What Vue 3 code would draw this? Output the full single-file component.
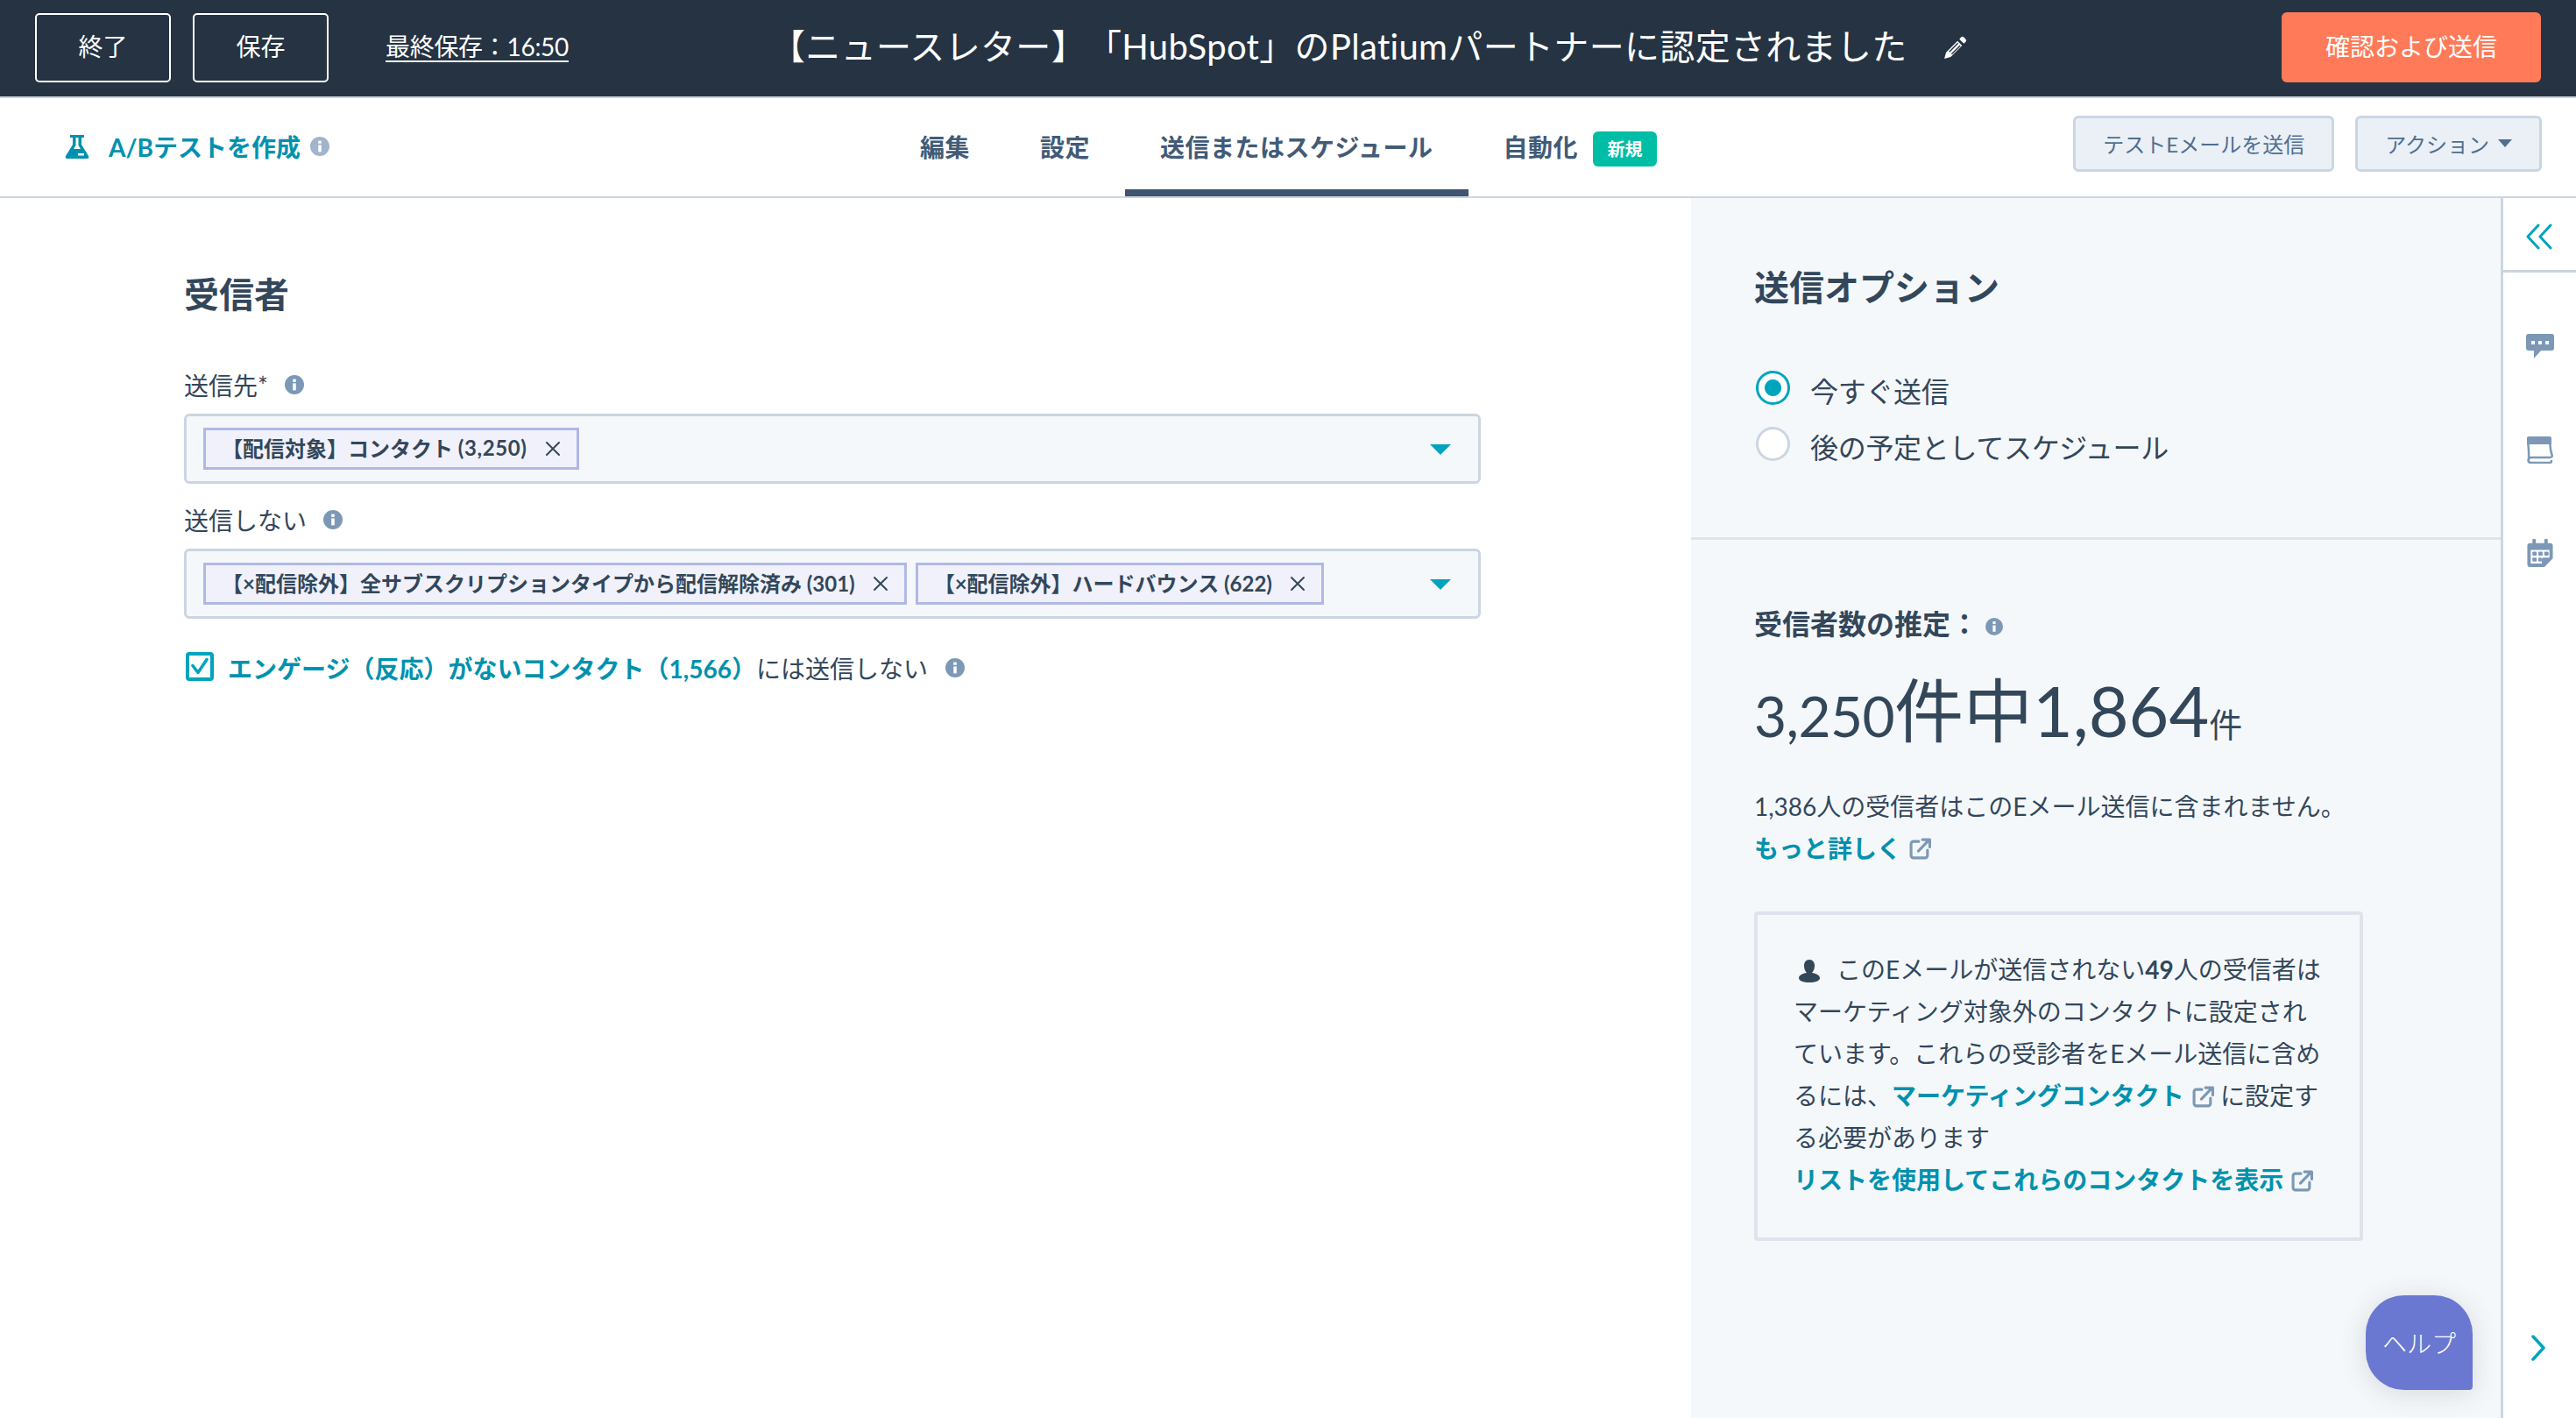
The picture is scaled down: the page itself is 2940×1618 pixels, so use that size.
<script setup>
const tabs = [
  { label: '編集' },
  { label: '設定' },
  { label: '送信またはスケジュール', active: true },
  { label: '自動化', badge: '新規' },
]

const sideIcons = ['chat', 'book', 'calendar']
</script>

<template>
  <div class="page">
    <!-- icon sprite -->
    <svg class="sprite" aria-hidden="true">
      <symbol id="info" viewBox="0 0 22 22">
        <circle cx="11" cy="11" r="11" fill="currentColor" />
        <rect x="9.2" y="9.4" width="3.6" height="8" fill="#fff" />
        <rect x="9.2" y="4.6" width="3.6" height="3.2" fill="#fff" />
      </symbol>
      <symbol id="external" viewBox="0 0 24 24">
        <path d="M10.500 4H4.500A2.500 2.500 0 0 0 2 6.500v13A2.500 2.500 0 0 0 4.500 22h13a2.500 2.500 0 0 0 2.500-2.500V13.500" fill="none" stroke="#7c98b6" stroke-width="3" stroke-linecap="round" />
        <path d="M10 14.500 21.500 2.500M14.500 2h8v8" fill="none" stroke="#7c98b6" stroke-width="3" stroke-linecap="round" stroke-linejoin="round" />
      </symbol>
      <symbol id="close" viewBox="0 0 18 18">
        <path d="M2 2l14 14M16 2 2 16" fill="none" stroke="#33475b" stroke-width="2" stroke-linecap="round" />
      </symbol>
      <symbol id="chat" viewBox="0 0 32 30">
        <path d="M3 1h26a3 3 0 0 1 3 3v13a3 3 0 0 1-3 3H17l-8 9v-9H3a3 3 0 0 1-3-3V4a3 3 0 0 1 3-3z" fill="#7c98b6" />
        <rect x="6" y="9" width="4" height="4" fill="#fff" />
        <rect x="14" y="9" width="4" height="4" fill="#fff" />
        <rect x="22" y="9" width="4" height="4" fill="#fff" />
      </symbol>
      <symbol id="book" viewBox="0 0 32 32">
        <path d="M3 1h24a2 2 0 0 1 2 2v7H1V3a2 2 0 0 1 2-2z" fill="#7c98b6" />
        <path d="M2.500 9c0 5 1 10 .5 15M27.500 9c0 5 .5 9 2 13 .8 2-.5 3-2.500 3H6c-2 0-3.500 1-3.500 3S4 31 6 31h21c1.500 0 2-.8 2-2" fill="none" stroke="#7c98b6" stroke-width="2.500" stroke-linecap="round" />
      </symbol>
      <symbol id="calendar" viewBox="0 0 30 33">
        <path d="M7 0h2a1 1 0 0 1 1 1v4h10V1a1 1 0 0 1 1-1h2a1 1 0 0 1 1 1v4h3a3 3 0 0 1 3 3v15l-10 10H3a3 3 0 0 1-3-3V8a3 3 0 0 1 3-3h3V1a1 1 0 0 1 1-1z" fill="#7c98b6" />
        <path d="M4 13h22v9h-7a2 2 0 0 0-2 2v5H4z" fill="#fff" />
        <g fill="#7c98b6">
          <rect x="6" y="15" width="5" height="4.500" rx="1" />
          <rect x="13" y="15" width="5" height="4.500" rx="1" />
          <rect x="20" y="15" width="5" height="4.500" rx="1" />
          <rect x="6" y="22" width="5" height="4.500" rx="1" />
          <rect x="13" y="22" width="4" height="4.500" rx="1" />
        </g>
      </symbol>
    </svg>

    <header class="topbar">
      <div class="topbar-left">
        <button class="ghost-btn">終了</button>
        <button class="ghost-btn">保存</button>
        <a class="last-saved">最終保存：16:50</a>
      </div>
      <div class="title-wrap">
        <h1 class="title">【ニュースレター】「HubSpot」のPlatiumパートナーに認定されました</h1>
        <svg class="pencil" viewBox="0 0 26 26">
          <path d="M15.500 5.500l5 5L8 23l-7 2 2-7z" fill="#fff" />
          <path d="M6.500 17.500 16 8M9 20l9.500-9.500" stroke="#253342" stroke-width="1.400" />
          <path d="M17.500 3.500l2-2a2.200 2.200 0 0 1 3 0l2 2a2.200 2.200 0 0 1 0 3l-2 2z" fill="#fff" />
        </svg>
      </div>
      <button class="send-btn">確認および送信</button>
    </header>

    <nav class="subbar">
      <a class="ab-link">
        <svg class="flask" viewBox="0 0 28 27">
          <path d="M6 0h16v3h-3v8l8 13c1 2 0 3-2 3H3c-2 0-3-1-2-3l8-13V3H6zM12.500 3v9l-2.500 4h8l-2.500-4V3z" fill="#0091ae" fill-rule="evenodd" />
          <rect x="15" y="21" width="7" height="2.500" fill="#fff" />
        </svg>
        <span>A/Bテストを作成</span>
        <svg class="info info-light"><use href="#info" /></svg>
      </a>
      <div class="tabs">
        <div v-for="tab in tabs" :key="tab.label" class="tab" :class="{ active: tab.active }">
          {{ tab.label }}
          <span v-if="tab.badge" class="badge">{{ tab.badge }}</span>
        </div>
      </div>
      <div class="subbar-actions">
        <button class="light-btn">テストEメールを送信</button>
        <button class="light-btn">アクション<i class="small-caret"></i></button>
      </div>
    </nav>

    <div class="body">
      <main class="recipients">
        <h2 class="section-title">受信者</h2>

        <label class="field-label first">送信先*<svg class="info"><use href="#info" /></svg></label>
        <div class="select-box">
          <span class="chip">【配信対象】コンタクト&nbsp;<span class="chip-count">(3,250)</span><svg class="chip-x"><use href="#close" /></svg></span>
          <i class="caret"></i>
        </div>

        <label class="field-label">送信しない<svg class="info"><use href="#info" /></svg></label>
        <div class="select-box">
          <span class="chip">【×配信除外】全サブスクリプションタイプから配信解除済み (301)<svg class="chip-x"><use href="#close" /></svg></span>
          <span class="chip">【×配信除外】ハードバウンス (622)<svg class="chip-x"><use href="#close" /></svg></span>
          <i class="caret"></i>
        </div>

        <div class="engage-row">
          <span class="checkbox">
            <svg viewBox="0 0 24 24"><path d="M4 11l6 8L20 4" fill="none" stroke="#00a4bd" stroke-width="3.500" stroke-linecap="round" stroke-linejoin="round" /></svg>
          </span>
          <a class="link strong">エンゲージ（反応）がないコンタクト（1,566）</a>
          <span class="engage-text">には送信しない</span>
          <svg class="info"><use href="#info" /></svg>
        </div>
      </main>

      <aside class="panel">
        <section class="panel-section options">
          <h2 class="section-title">送信オプション</h2>
          <div class="radio-row">
            <span class="radio checked"></span>
            <span class="radio-label">今すぐ送信</span>
          </div>
          <div class="radio-row">
            <span class="radio"></span>
            <span class="radio-label">後の予定としてスケジュール</span>
          </div>
        </section>

        <section class="panel-section estimate">
          <h3 class="estimate-title">受信者数の推定：<svg class="info info-small"><use href="#info" /></svg></h3>
          <div class="estimate-num">
            <span class="num-mid">3,250</span><span class="num-big">件中1,864</span><span class="num-small">件</span>
          </div>
          <p class="estimate-note">1,386人の受信者はこのEメール送信に含まれません。</p>
          <a class="link strong more">もっと詳しく<svg class="external"><use href="#external" /></svg></a>

          <div class="notice">
            <svg class="person" viewBox="0 0 24 26">
              <path d="M12 0c4 0 6 3 6 7 0 3-1 6-3 8 4 .5 9 2.500 9 6 0 3-5 5-12 5S0 24 0 21c0-3.500 5-5.500 9-6-2-2-3-5-3-8 0-4 2-7 6-7z" fill="#33475b" />
            </svg>
            <span>このEメールが送信されない<b>49</b>人の受信者は</span><br />
            マーケティング対象外のコンタクトに設定され<br />
            ています。これらの受診者をEメール送信に含め<br />
            るには、<a class="link strong">マーケティングコンタクト<svg class="external"><use href="#external" /></svg></a> に設定す<br />
            る必要があります<br />
            <a class="link strong">リストを使用してこれらのコンタクトを表示<svg class="external"><use href="#external" /></svg></a>
          </div>
        </section>

        <button class="help-btn">ヘルプ</button>
      </aside>

      <div class="rail">
        <div class="rail-top">
          <svg class="rail-chevrons" viewBox="0 0 30 30">
            <path d="M14 2 2 15l12 13M28 2 16 15l12 13" fill="none" stroke="#00a4bd" stroke-width="3" stroke-linecap="round" stroke-linejoin="round" />
          </svg>
        </div>
        <div class="rail-icons">
          <svg v-for="name in sideIcons" :key="name" class="rail-icon"><use :href="'#' + name" /></svg>
        </div>
        <svg class="rail-next" viewBox="0 0 18 30">
          <path d="M3 2l12 13L3 28" fill="none" stroke="#00a4bd" stroke-width="3.500" stroke-linecap="round" stroke-linejoin="round" />
        </svg>
      </div>
    </div>
  </div>
</template>

<style>
html, body {
  margin: 0;
  background: #fff;
}
</style>

<style scoped>
.page {
  height: 1618px;
  width: 2940px;
  overflow: hidden;
  display: flex;
  flex-direction: column;
  font-family: Lato, "Noto Sans CJK JP", sans-serif;
  font-size: 28px;
  color: #33475b;
  text-spacing-trim: space-all;
}

.sprite {
  position: absolute;
  width: 0;
  height: 0;
}

button {
  font-family: inherit;
  cursor: pointer;
}

/* top bar */
.topbar {
  height: 110px;
  box-sizing: border-box;
  flex: none;
  display: flex;
  align-items: center;
  padding: 0 40px 2px;
  background: #253342;
  color: #fff;
  box-shadow: 0 2px 0 #cbd6e2;
  position: relative;
}

.topbar-left {
  display: flex;
  align-items: center;
  gap: 25px;
  width: 839px;
}

.ghost-btn {
  width: 155px;
  height: 79px;
  padding: 0 0 4px;
  border: 2.500px solid #fff;
  border-radius: 5px;
  background: transparent;
  color: #fff;
  font-size: 28px;
}

.last-saved {
  margin-left: 40px;
  padding-bottom: 4px;
  text-decoration: underline;
  text-underline-offset: 5px;
  font-size: 28px;
  letter-spacing: -0.3px;
}

.title-wrap {
  flex: 1;
  display: flex;
  align-items: center;
  min-width: 0;
}

.title {
  margin: -6px 0 0;
  font-size: 40px;
  font-weight: 400;
  letter-spacing: 0.33px;
  white-space: nowrap;
}

.pencil {
  width: 27px;
  height: 27px;
  margin-left: 41px;
}

.send-btn {
  width: 296px;
  height: 80px;
  padding: 0 0 4px;
  border: 0;
  border-radius: 6px;
  background: #ff7a59;
  color: #fff;
  font-size: 28px;
}

/* tabs row */
.subbar {
  margin-top: 2px;
  height: 114px;
  box-sizing: border-box;
  flex: none;
  display: grid;
  grid-template-columns: 1010px auto 1fr;
  border-bottom: 2px solid #cbd6e2;
  padding-right: 39px;
}

.ab-link {
  display: flex;
  align-items: center;
  padding-left: 74px;
  padding-bottom: 2px;
  color: #0091ae;
  font-weight: 700;
  height: 110px;
}

.flask {
  width: 28px;
  height: 27px;
  margin-right: 22px;
}

.info {
  width: 22px;
  height: 22px;
  color: #7c98b6;
  flex: none;
}

.info-light {
  color: #a0b4cb;
  margin-left: 11px;
}

.tabs {
  display: flex;
}

.tab {
  display: flex;
  align-items: center;
  gap: 17px;
  padding: 0 40px 3px;
  height: 112px;
  box-sizing: border-box;
  font-weight: 700;
  letter-spacing: 0.5px;
  color: #425b76;
}

.tab.active {
  border-bottom: 8px solid #3e5470;
  padding-top: 5px;
  padding-bottom: 0;
}

.badge {
  display: flex;
  align-items: center;
  justify-content: center;
  width: 73px;
  height: 40px;
  margin-top: 6px;
  border-radius: 6px;
  background: #00bda5;
  color: #fff;
  font-size: 20px;
  font-weight: 700;
  letter-spacing: 0;
}

.subbar-actions {
  display: flex;
  justify-content: flex-end;
  align-items: flex-start;
  gap: 24px;
  padding-top: 20px;
}

.light-btn {
  height: 64px;
  padding: 0 31px 2px;
  border: 3px solid #cbd6e2;
  border-radius: 6px;
  background: #eaf0f6;
  color: #506e91;
  font-size: 24px;
  display: flex;
  align-items: center;
}

.small-caret {
  width: 0;
  height: 0;
  margin-left: 10px;
  border-left: 8px solid transparent;
  border-right: 8px solid transparent;
  border-top: 9px solid #506e91;
}

/* main area */
.body {
  flex: 1;
  display: flex;
  min-height: 0;
}

.recipients {
  width: 1930px;
  box-sizing: border-box;
  padding: 83px 240px 0 210px;
  flex: none;
}

.section-title {
  margin: 0;
  font-size: 40px;
  line-height: 54px;
  font-weight: 700;
}

.field-label {
  display: flex;
  align-items: center;
  height: 40px;
  gap: 19px;
  margin-top: 21px;
  margin-bottom: 13px;
}

.field-label.first {
  margin-top: 56px;
}

.select-box {
  position: relative;
  height: 80px;
  box-sizing: border-box;
  display: flex;
  align-items: center;
  gap: 10px;
  padding: 0 19px;
  border: 3px solid #cbd6e2;
  border-radius: 6px;
  background: #f5f8fa;
}

.chip {
  display: flex;
  align-items: center;
  height: 48px;
  box-sizing: border-box;
  padding: 0 18px 3px;
  border: 3px solid #b0b8e6;
  background: #f0f1fa;
  font-size: 24px;
  font-weight: 700;
  white-space: nowrap;
}

.chip-count {
  letter-spacing: 0.6px;
}

.chip-x {
  width: 18px;
  height: 18px;
  margin: 3px 0 0 20px;
}

.caret {
  position: absolute;
  right: 31px;
  top: 32px;
  width: 0;
  height: 0;
  border-left: 12px solid transparent;
  border-right: 12px solid transparent;
  border-top: 12px solid #00a4bd;
}

.engage-row {
  display: flex;
  align-items: center;
  margin-top: 32px;
  height: 48px;
}

.checkbox {
  width: 32px;
  height: 33px;
  box-sizing: border-box;
  border: 4px solid #00a4bd;
  border-radius: 4px;
  margin: -4px 16px 0 2px;
  display: flex;
}

.checkbox svg {
  width: 100%;
  height: 100%;
}

.link {
  color: #0091ae;
}

.strong {
  font-weight: 700;
}

.engage-text {
  margin-left: 0;
}

.engage-row .info {
  margin-left: 20px;
}

/* right panel */
.panel {
  position: relative;
  width: 924px;
  flex: none;
  background: #f5f8fa;
}

.panel-section {
  padding-left: 72px;
}

.options {
  height: 390px;
  box-sizing: border-box;
  padding-top: 75px;
  border-bottom: 3px solid #dfe3eb;
}

.radio-row {
  display: flex;
  align-items: flex-start;
  height: 64px;
  font-size: 32px;
}

.options .section-title {
  margin-bottom: 67px;
}

.radio {
  width: 39px;
  height: 39px;
  box-sizing: border-box;
  border: 3px solid #cbd6e2;
  border-radius: 50%;
  background: #fff;
  margin: 1px 23px 0 2px;
  flex: none;
}

.radio.checked {
  border-color: #00a4bd;
  background: radial-gradient(circle, #00a4bd 0 9px, #fff 10px);
}

.radio-label {
  line-height: 48px;
  margin-top: 1px;
  letter-spacing: -0.3px;
}

.estimate {
  padding-top: 74px;
}

.estimate-title {
  margin: 0;
  display: flex;
  align-items: center;
  font-size: 32px;
  line-height: 44px;
  font-weight: 700;
}

.info-small {
  width: 20px;
  height: 20px;
  margin: 6px 0 0 8px;
}

.estimate-num {
  display: flex;
  align-items: baseline;
  margin-top: 22px;
  line-height: 110px;
}

.num-mid {
  font-size: 64px;
  letter-spacing: -0.6px;
}

.num-big {
  font-size: 79px;
}

.num-small {
  font-size: 38px;
}

.estimate-note {
  margin: 15px 0 0;
  line-height: 48px;
}

.more {
  display: inline-flex;
  align-items: center;
  line-height: 48px;
}

.external {
  width: 25px;
  height: 25px;
  margin-left: 9px;
  vertical-align: -3px;
}

.notice {
  margin-top: 48px;
  width: 695px;
  height: 376px;
  box-sizing: border-box;
  padding: 38px 20px 0 41px;
  border: 4px solid #dfe3eb;
  border-radius: 4px;
  line-height: 48px;
  white-space: nowrap;
}

.person {
  width: 24px;
  height: 26px;
  margin: 0 19px 0 6px;
  vertical-align: -4px;
}

.help-btn {
  position: absolute;
  left: 770px;
  bottom: 32px;
  width: 122px;
  height: 108px;
  border: 0;
  border-radius: 44px 44px 4px 44px;
  background: #6a78d1;
  color: #fff;
  font-size: 28px;
  font-weight: 300;
  box-shadow: 0 4px 30px rgba(45, 62, 80, 0.16);
}

/* right rail */
.rail {
  flex: 1;
  position: relative;
  border-left: 3px solid #cbd6e2;
  background: #fff;
}

.rail-top {
  height: 82px;
  box-sizing: content-box;
  display: flex;
  align-items: center;
  justify-content: center;
  border-bottom: 3px solid #cbd6e2;
}

.rail-chevrons {
  width: 30px;
  height: 30px;
  margin: 6px 2px 0 0;
}

.rail-icons {
  display: flex;
  flex-direction: column;
  align-items: center;
  gap: 86px;
  padding-top: 68px;
}

.rail-icon {
  width: 32px;
  height: 32px;
}

.rail-next {
  position: absolute;
  left: 31px;
  bottom: 65px;
  width: 18px;
  height: 30px;
}
</style>
